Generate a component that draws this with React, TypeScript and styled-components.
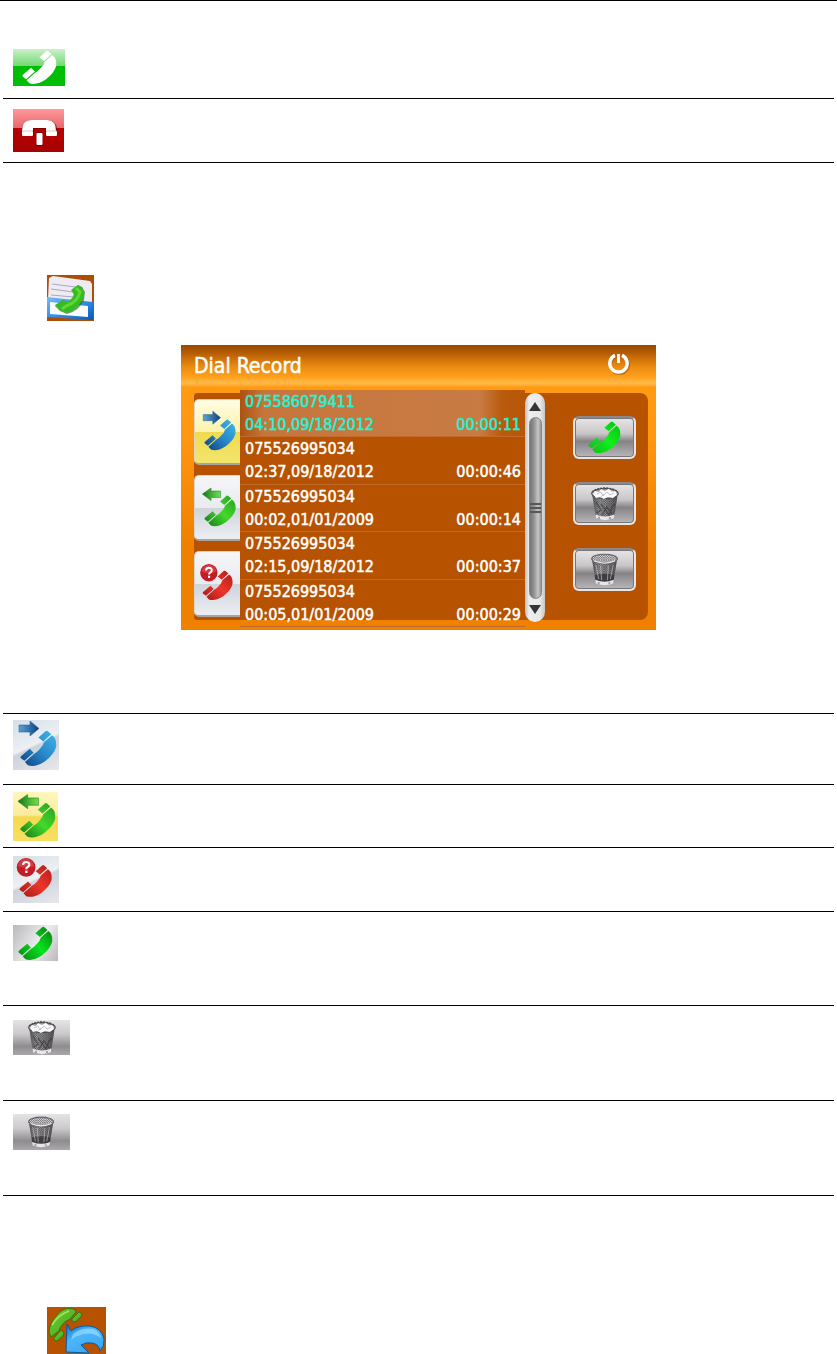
import React, { useId, useState } from "react";
import styled, { createGlobalStyle } from "styled-components";

const GlobalStyle = createGlobalStyle`
  * { box-sizing: border-box; }
  body { margin: 0; background: #fff; font-family: "DejaVu Sans Condensed", "DejaVu Sans", sans-serif; }
  svg { display: block; }
`;

const Page = styled.main`
  border-top: 1px solid #000;
`;

const KeyList = styled.ul<{ $ruled?: boolean }>`
  list-style: none;
  margin: 0 3px;
  padding: 0;
  border-top: ${(p) => (p.$ruled ? "1px solid #000" : "none")};
`;

const KeyRow = styled.li<{ $height: number; $top: number }>`
  min-height: ${(p) => p.$height}px;
  padding: ${(p) => p.$top}px 10px 0;
  border-bottom: 1px solid #000;
`;

const Step = styled.section<{ $top: number }>`
  padding: ${(p) => p.$top}px 47px 0;
`;

const Device = styled.section`
  max-width: 475px;
  height: 285px;
  margin: 24px auto 83px;
  color: #fff;
  background: linear-gradient(#ff9b12 40px, #ff9710 90px, #f08000 200px, #f08000);
`;

const TitleBar = styled.header`
  display: flex;
  justify-content: space-between;
  align-items: center;
  height: 42px;
  padding: 0 26px 0 13px;
  background: linear-gradient(#984800, #b55d05 8px, #e98910 21px, #ffa01c 32px, #ffb643 37px, #ffb643 39px, #ff9c18);
`;

const Title = styled.h1`
  margin: 0;
  font-size: 21px;
  line-height: 24px;
  font-weight: 400;
  -webkit-text-stroke: 0.5px #fff;
`;

const PlainButton = styled.button`
  padding: 0;
  border: 0;
  background: none;
`;

const PowerButton = styled(PlainButton)`
  padding-bottom: 6px;
`;

const Panel = styled.div`
  display: flex;
  height: 227px;
  margin: 6px 8px 0 13px;
  border-radius: 3px 8px 8px 3px;
  background: #b65200;
`;

const Tabs = styled.div`
  display: flex;
  flex-direction: column;
  gap: 10px;
  width: 46px;
  padding-top: 6px;
`;

const Tab = styled.button<{ $active: boolean }>`
  display: flex;
  justify-content: center;
  align-items: center;
  height: 66px;
  padding: 0;
  border: 1px solid #d9d3cb;
  border-width: 1px 0 2px 1px;
  border-bottom-color: #a9a4a0;
  border-radius: 5px 0 0 5px;
  background: ${(p) =>
    p.$active
      ? "linear-gradient(#fffde2, #fbf3ac 50%, #efdb50 51%, #f3e56c)"
      : "linear-gradient(#f6f6f8, #e9ebef 50%, #cfd3da 51%, #eceef2)"};
`;

const Records = styled.ol`
  display: flex;
  flex-direction: column;
  flex: 1;
  min-width: 0;
  height: 237px;
  margin: -3px 0 0;
  padding: 0;
  list-style: none;
  font-size: 16px;
`;

const RecordItem = styled.li<{ $active: boolean }>`
  flex: 1;
  min-height: 0;
  padding: 0 4px 0 5px;
  border-bottom: 1px solid #c06a2a;
  color: ${(p) => (p.$active ? "#20f5dc" : "#fff")};
  background: ${(p) =>
    p.$active
      ? "linear-gradient(90deg, #ad5210, #c6763d 24px, #c87b43 240px, #b95a0d 262px, #b85608)"
      : "none"};
  -webkit-text-stroke: 0.5px currentColor;
`;

const RecordLine = styled.div`
  display: flex;
  justify-content: space-between;
  line-height: 23px;
  white-space: nowrap;
`;

const ScrollBar = styled.div`
  display: flex;
  flex-direction: column;
  justify-content: space-between;
  align-items: center;
  width: 20px;
  height: 229px;
  padding: 9px 0 8px;
  border-radius: 10px;
  background: linear-gradient(90deg, #bdbdbd, #eeeeef 4px, #e8e8e9 15px, #c6c6c6);
`;

const Thumb = styled.div`
  display: flex;
  flex-direction: column;
  justify-content: center;
  gap: 2px;
  width: 13px;
  height: 182px;
  border: 1px solid #858585;
  border-radius: 7px;
  background: linear-gradient(90deg, #777, #929292 4px, #c6c6c6 8px, #989898);
`;

const Grip = styled.span`
  height: 2px;
  background: #575757;
`;

const Actions = styled.div`
  display: flex;
  flex-direction: column;
  gap: 23px;
  width: 103px;
  padding: 23px 12px 0 28px;
`;

const ActionButton = styled.button`
  display: flex;
  justify-content: center;
  align-items: center;
  height: 43px;
  padding: 0;
  border: 2px solid #e9e5e5;
  border-top-color: #8d8989;
  border-radius: 6px;
  box-shadow: inset 0 0 0 1px #777;
  background: linear-gradient(#e8e5e7, #c9c6c8 40%, #858385 60%, #b9b7b9);
`;

const Tile = styled.div<{ $w: number; $h: number; $bg: string }>`
  display: flex;
  justify-content: center;
  align-items: center;
  width: ${(p) => p.$w}px;
  height: ${(p) => p.$h}px;
  background: ${(p) => p.$bg};
`;

const tones = {
  blue: ["#45b9e8", "#2789cc", "#0d3c78"],
  green: ["#249b20", "#43d92a", "#126e18"],
  red: ["#a61c18", "#f0352a", "#a01515"],
  lime: ["#087310", "#05e51b", "#087a13"],
  bright: ["#00c010", "#10f01a", "#08b818"],
  white: ["#fff", "#fff", "#fff"],
};
type Tone = keyof typeof tones;

function HandsetShape({ fill }: { fill: string }) {
  return (
    <g fill={fill} strokeLinejoin="round">
      <path d="M18.4 7.6 25.5 1.2Q26.7 .2 27.8 1.2L31.2 4.2 23.2 11.5Z" />
      <path d="M.6 28Q0 27 1.2 26L9.8 18.8 13.6 22.8 4.4 30.8Z" />
      <path d="M24 12.3 32 5.2Q37 8.4 36.1 17Q34.2 24.2 25.4 31Q15.6 37.8 7.9 35.2L4.9 32 14.2 23.7Q17 22.6 20 18.8Q23.4 15.4 24 12.3Z" />
    </g>
  );
}

function Handset({ tone, size }: { tone: Tone; size: number }) {
  const id = useId();
  const [a, b, c] = tones[tone];
  return (
    <svg width={size} height={size} viewBox="0 0 37 37" aria-hidden="true">
      <defs>
        <linearGradient id={id} x1="37" y1="0" x2="0" y2="37" gradientUnits="userSpaceOnUse">
          <stop offset="0" stopColor={a} />
          <stop offset=".5" stopColor={b} />
          <stop offset="1" stopColor={c} />
        </linearGradient>
      </defs>
      <HandsetShape fill={`url(#${id})`} />
    </svg>
  );
}

type CallKind = "dialed" | "received" | "missed";

function CallIcon({ kind, width = 46, height = 50 }: { kind: CallKind; width?: number; height?: number }) {
  const id = useId();
  const [a, b, c] = tones[kind === "dialed" ? "blue" : kind === "received" ? "green" : "red"];
  return (
    <svg width={width} height={height} viewBox="0 0 46 50" aria-hidden="true">
      <defs>
        <linearGradient id={id} x1="37" y1="0" x2="0" y2="37" gradientUnits="userSpaceOnUse">
          <stop offset="0" stopColor={a} />
          <stop offset=".5" stopColor={b} />
          <stop offset="1" stopColor={c} />
        </linearGradient>
        <linearGradient id={`${id}a`} x1={kind === "dialed" ? "0" : "1"} x2={kind === "dialed" ? "1" : "0"}>
          <stop offset="0" stopColor={b} stopOpacity=".75" />
          <stop offset="1" stopColor={c} />
        </linearGradient>
      </defs>
      <g transform={kind === "missed" ? "translate(5 9) scale(.96)" : "translate(7 10)"}>
        <HandsetShape fill={`url(#${id})`} />
      </g>
      {kind === "dialed" && <path d="M6 5H17V1L26 8.5 17 16V12H6Z" fill={`url(#${id}a)`} stroke="#2c679c" strokeWidth=".6" />}
      {kind === "received" && <path d="M26 5.5H15V2L5 9 15 16.5V13H26Z" fill={`url(#${id}a)`} stroke="#277b22" strokeWidth=".6" />}
      {kind === "missed" && (
        <>
          <circle cx="12.5" cy="12" r="10" fill="#c41b25" />
          <path d="M4 11a8.5 8 0 0 1 17 0Q13 14 4 11Z" fill="#eb6468" opacity=".45" />
          <path d="M9.2 9.5Q9.4 6.2 12.8 6.4 16.2 6.7 15.8 9.5 15.5 11.1 13.7 12.1 12.7 12.7 12.7 14" fill="none" stroke="#fff" strokeWidth="2.3" />
          <rect x="11.5" y="15.5" width="2.5" height="2.5" fill="#fff" />
        </>
      )}
    </svg>
  );
}

function Bin({ full, height }: { full?: boolean; height: number }) {
  const id = useId();
  return (
    <svg width={height * 0.88} height={height} viewBox="0 0 30 34" aria-hidden="true">
      <defs>
        <linearGradient id={id}>
          <stop offset="0" stopColor="#5c5b5d" />
          <stop offset=".3" stopColor="#a3a2a4" />
          <stop offset=".65" stopColor="#858486" />
          <stop offset="1" stopColor="#545355" />
        </linearGradient>
        <pattern id={`${id}m`} width="2.4" height="2.4" patternUnits="userSpaceOnUse">
          <path d="M0 0 2.4 2.4M2.4 0 0 2.4" stroke="#3c3b3e" strokeWidth=".45" />
        </pattern>
      </defs>
      <path d="M2 6 6 31Q15 35 24 31L28 6Z" fill={`url(#${id})`} />
      <path d="M2 6 6 31Q15 35 24 31L28 6Z" fill={`url(#${id}m)`} />
      {full ? (
        <>
          <path d="M6 15 11 23 7 26M11 17 19 28 22 20 25 17M12 28 17 20 22 27" fill="none" stroke="#2b2a2d" strokeWidth="1.3" opacity=".55" />
          <ellipse cx="15" cy="6.5" rx="13.5" ry="5" fill="#9a989c" stroke="#454347" />
          <path d="M3 7 5 4 9 5 11 2 15 4 19 1.6 22 4.5 26 4 27 8 23 11 18 10 14 12 10 10 6 11Z" fill="#fafafa" />
          <path d="M7 7 11 5 13 9 17 5 20 8 24 6M11 10 14 7" fill="none" stroke="#bebcc0" strokeWidth=".9" />
          <path d="M2 5Q7 1 15 1T28 5" fill="none" stroke="#4d4b50" strokeWidth="1.5" strokeDasharray="2 1" />
        </>
      ) : (
        <>
          <path d="M5 23Q15 20 25 23L24.3 28Q15 32 5.7 28Z" fill="#333136" opacity=".8" />
          <ellipse cx="15" cy="6" rx="13.3" ry="4.8" fill="#dcdade" stroke="#6a686d" strokeWidth="1.2" />
          <ellipse cx="15" cy="6" rx="13.3" ry="4.8" fill={`url(#${id}m)`} />
          <path d="M4 8Q15 13 26 8" fill="none" stroke="#f1eff3" strokeWidth="1.2" />
          <path d="M6 12 9 27M11 13 12 28M19 13 18 28M24 12 21 27" stroke="#c2c0c5" strokeWidth=".7" />
        </>
      )}
      <path d="M5.4 27.6Q15 31.6 24.6 27.6L24 31.4Q15 35 6 31.4Z" fill="#e8e6ea" />
      <path d="M9 29.8V32.5M20 30V32" stroke="#a5a3a8" strokeWidth="2" />
    </svg>
  );
}

function HangUpIcon() {
  return (
    <svg width="51" height="43" viewBox="0 0 51 43" role="img" aria-label="Hang up">
      <path d="M9 26V19Q10 11 18 11H35Q43 12 44 19V27H32V20H21V27H9ZM23 23H30V37H23Z" fill="#700000" opacity=".65" />
      <path d="M9 22Q9 11 18 11H34Q43 11 43 22H33V19H20V22Z" fill="#fff" />
      <rect x="9" y="22" width="11" height="5" rx="1" fill="#fff" />
      <rect x="33" y="22" width="11" height="5" rx="1" fill="#fff" />
      <path d="M9 22H20M33 22H44" stroke="#d99a9a" strokeWidth=".6" />
      <rect x="23.5" y="24" width="6" height="12" rx="1" fill="#fff" />
    </svg>
  );
}

function RecordBookIcon() {
  const id = useId();
  return (
    <svg width="47" height="46" viewBox="0 0 47 46" role="img" aria-label="Dial record">
      <defs>
        <linearGradient id={id} x1="0" y1="0" x2="1" y2="1">
          <stop offset="0" stopColor="#75baf7" />
          <stop offset=".65" stopColor="#2681dd" />
          <stop offset="1" stopColor="#0756b8" />
        </linearGradient>
      </defs>
      <path d="M0 0H47V46H0Z" fill="#ad4d08" />
      <path d="M2 3 6 1 43 6 45 9V29L1 24Z" fill="#eeecf2" />
      <path d="M5 9 36 13M4 14 34 18M4 20 26 22" stroke="#a6a8c5" strokeWidth="1.2" />
      <path d="M0 22 46 27V45L0 42Z" fill={`url(#${id})`} />
      <path d="M3 27 41 31V42L3 39Z" fill="#fafaff" />
      <path d="M25 15 31 10 35 12 38 17 37 25Q32 36 20 39L13 36 8 31 16 25 21 28Q27 26 27 20Z" fill="#246d22" opacity=".65" />
      <path d="M24 15 31 10 34 12 37 17 36 24Q30 35 19 38L13 35 8 30 16 25 20 27Q25 25 27 19Z" fill="#35bc20" />
      <path d="M29 13 33 17Q31 27 19 31L15 34" fill="none" stroke="#5fd830" strokeWidth="3" />
    </svg>
  );
}

function RedialIcon() {
  const id = useId();
  return (
    <svg width="59" height="47" viewBox="0 0 59 47" role="img" aria-label="Redial">
      <defs>
        <linearGradient id={id} x1="0" y1="0" x2=".7" y2="1">
          <stop offset="0" stopColor="#0f78cc" />
          <stop offset=".45" stopColor="#4db5fa" />
          <stop offset="1" stopColor="#38a8f5" />
        </linearGradient>
        <linearGradient id={`${id}g`} x1="0" y1="0" x2="1" y2="1">
          <stop offset="0" stopColor="#72cf30" />
          <stop offset="1" stopColor="#3ea51c" />
        </linearGradient>
      </defs>
      <path d="M0 0H59V47H0Z" fill="#b65200" />
      <g fill={`url(#${id}g)`} stroke="#247012" strokeWidth=".8">
        <path d="M22 1.5 27 2 29 5 23 12Q17 14 13 21L12 24 4 30 2 25Q3 15 11 7 17 1 22 1.5Z" />
        <path d="M25 12 32 5 35 7 34 10 28 15 25 14Z" />
        <path d="M7 31 14 23 17 26 16 29 10 34 7 33Z" />
      </g>
      <path d="M5 18Q11 8 22 4" fill="none" stroke="#a3e465" strokeWidth="1.6" />
      <path d="M20 17 24 24Q31 18 43 19 55 21 57 32 58 39 53 44 52 37 45 36 39 35 34 38L42 46 19 45Z" fill={`url(#${id})`} stroke="#075b9c" />
      <path d="M26 27Q35 20 46 22 53 25 54 31 46 25 36 27 29 29 24 33Z" fill="#a6e2ff" opacity=".6" />
    </svg>
  );
}

function PowerIcon() {
  return (
    <svg width="23" height="23" viewBox="0 0 23 23" aria-hidden="true">
      <path d="M8.3 3.2A9 9 0 1 0 14.7 3.2" fill="none" stroke="#8d4d0e" strokeWidth="3" transform="translate(1 1)" opacity=".5" />
      <path d="M8 3.4A8.7 8.7 0 1 0 15 3.4" fill="none" stroke="#fff" strokeWidth="3.4" />
      <path d="M11.5 2V11" stroke="#fff" strokeWidth="2.8" />
    </svg>
  );
}

function Arrow({ down }: { down?: boolean }) {
  return (
    <svg width="12" height="9" viewBox="0 0 12 9" aria-hidden="true">
      <path d={down ? "M0 0H12L6 9Z" : "M6 0 12 9H0Z"} fill="#363636" />
    </svg>
  );
}

const tabs: { kind: CallKind; label: string }[] = [
  { kind: "dialed", label: "Dialed calls" },
  { kind: "received", label: "Received calls" },
  { kind: "missed", label: "Missed calls" },
];

const records = [
  { number: "075586079411", time: "04:10,09/18/2012", length: "00:00:11" },
  { number: "075526995034", time: "02:37,09/18/2012", length: "00:00:46" },
  { number: "075526995034", time: "00:02,01/01/2009", length: "00:00:14" },
  { number: "075526995034", time: "02:15,09/18/2012", length: "00:00:37" },
  { number: "075526995034", time: "00:05,01/01/2009", length: "00:00:29" },
];

const paleTile = "linear-gradient(155deg, #d3dfe8, #edf0f4 48%, #cbd3dc 52%, #e8e8eb)";
const yellowTile = "linear-gradient(#fff8bc, #faec9c 47%, #f5d94f 51%, #f7df60)";
const greyTile = "linear-gradient(#e5e3e5, #cbc9cb 40%, #8e8c8e 75%, #aaa8aa)";

export default function App() {
  const [tab, setTab] = useState<CallKind>("dialed");
  return (
    <>
      <GlobalStyle />
      <Page>
        <KeyList>
          <KeyRow $height={98} $top={48}>
            <Tile $w={52} $h={37} $bg="linear-gradient(#c9f2c9, #73d873 46%, #00bc05 47%, #00bf05)">
              <Handset tone="white" size={35} />
            </Tile>
          </KeyRow>
          <KeyRow $height={64} $top={10}>
            <Tile $w={51} $h={43} $bg="linear-gradient(#ff999c, #e6696d 44%, #b50003 45%, #a70000)">
              <HangUpIcon />
            </Tile>
          </KeyRow>
        </KeyList>

        <Step $top={112}>
          <RecordBookIcon />
        </Step>

        <Device>
          <TitleBar>
            <Title>Dial Record</Title>
            <PowerButton aria-label="Power"><PowerIcon /></PowerButton>
          </TitleBar>
          <Panel>
            <Tabs>
              {tabs.map((t) => (
                <Tab key={t.kind} $active={tab === t.kind} aria-label={t.label} onClick={() => setTab(t.kind)}>
                  <CallIcon kind={t.kind} width={40} height={44} />
                </Tab>
              ))}
            </Tabs>
            <Records>
              {records.map((r, i) => (
                <RecordItem key={i} $active={i === 0}>
                  <RecordLine>{r.number}</RecordLine>
                  <RecordLine>
                    <span>{r.time}</span>
                    <span>{r.length}</span>
                  </RecordLine>
                </RecordItem>
              ))}
            </Records>
            <ScrollBar>
              <PlainButton aria-label="Scroll up"><Arrow /></PlainButton>
              <Thumb><Grip /><Grip /><Grip /></Thumb>
              <PlainButton aria-label="Scroll down"><Arrow down /></PlainButton>
            </ScrollBar>
            <Actions>
              <ActionButton aria-label="Call"><Handset tone="bright" size={33} /></ActionButton>
              <ActionButton aria-label="Delete record"><Bin full height={34} /></ActionButton>
              <ActionButton aria-label="Delete all records"><Bin height={33} /></ActionButton>
            </Actions>
          </Panel>
        </Device>

        <KeyList $ruled>
          <KeyRow $height={71} $top={6}>
            <Tile $w={46} $h={50} $bg={paleTile}><CallIcon kind="dialed" /></Tile>
          </KeyRow>
          <KeyRow $height={63} $top={7}>
            <Tile $w={45} $h={49} $bg={yellowTile}><CallIcon kind="received" /></Tile>
          </KeyRow>
          <KeyRow $height={64} $top={8}>
            <Tile $w={46} $h={47} $bg={paleTile}><CallIcon kind="missed" height={47} /></Tile>
          </KeyRow>
          <KeyRow $height={94} $top={13}>
            <Tile $w={45} $h={36} $bg="linear-gradient(120deg, #b9b8ba, #eeecee 55%, #bab8ba)"><Handset tone="lime" size={35} /></Tile>
          </KeyRow>
          <KeyRow $height={95} $top={14}>
            <Tile $w={57} $h={35} $bg={greyTile}><Bin full height={34} /></Tile>
          </KeyRow>
          <KeyRow $height={95} $top={13}>
            <Tile $w={57} $h={36} $bg={greyTile}><Bin height={32} /></Tile>
          </KeyRow>
        </KeyList>

        <Step $top={111}>
          <RedialIcon />
        </Step>
      </Page>
    </>
  );
}
